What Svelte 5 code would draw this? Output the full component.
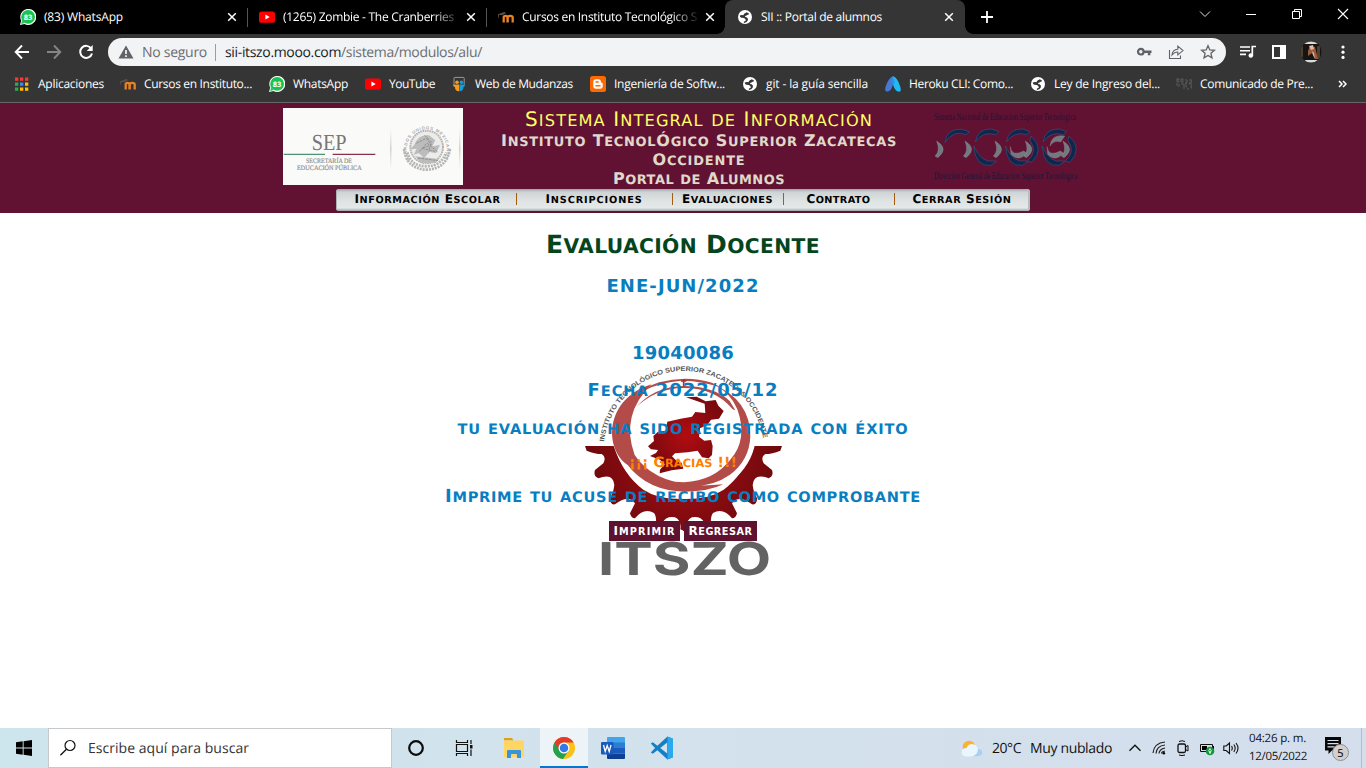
<script>
  const tabs = [
    { icon: 'wa', title: '(83) WhatsApp', w: 79 },
    { icon: 'yt', title: '(1265) Zombie - The Cranberries', w: 171, fade: true },
    { icon: 'moodle', title: 'Cursos en Instituto Tecnológico S', w: 175, fade: true },
    { icon: 'globe', title: 'SII :: Portal de alumnos', w: 121, active: true }
  ];
  const bookmarks = [
    { icon: 'apps', title: 'Aplicaciones', w: 66 },
    { icon: 'moodle', title: 'Cursos en Instituto...', w: 108 },
    { icon: 'wa', title: 'WhatsApp', w: 55 },
    { icon: 'yt', title: 'YouTube', w: 46 },
    { icon: 'movers', title: 'Web de Mudanzas', w: 98 },
    { icon: 'blogger', title: 'Ingeniería de Softw...', w: 111 },
    { icon: 'globe', title: 'git - la guía sencilla', w: 102 },
    { icon: 'azure', title: 'Heroku CLI: Como...', w: 104 },
    { icon: 'globe', title: 'Ley de Ingreso del...', w: 106 },
    { icon: 'noise', title: 'Comunicado de Pre...', w: 113 }
  ];
  const menu = [
    { title: 'Información Escolar', w: 146 },
    { title: 'Inscripciones', w: 97 },
    { title: 'Evaluaciones', w: 91 },
    { title: 'Contrato', w: 64 },
    { title: 'Cerrar Sesión', w: 99 }
  ];

  // Spreads the letters of a label so that it fills the given width.
  function fit(node, width) {
    const natural = node.getBoundingClientRect().width;
    const n = node.textContent.length;
    node.style.letterSpacing = `${(width - natural) / n}px`;
  }

  // Splits a label into runs of lower-case letters and everything else.
  const runs = (text) => text.match(/[a-záéíóúñ]+|[^a-záéíóúñ]+/g) ?? [];
  const isLower = (run) => /^[a-záéíóúñ]/.test(run);
</script>

{#snippet caps(text, width)}
  <span use:fit={width}>{#each runs(text) as r}{#if isLower(r)}<small>{r}</small>{:else}{r}{/if}{/each}</span>
{/snippet}

{#snippet icon(name)}
  <svg class="ico" width="16" height="16" viewBox="0 0 16 16">
    {#if name === 'wa'}
      <path d="M0 16 1.2 11.6A8 8 0 1 1 4.4 14.9Z" fill="#fff" />
      <circle cx="8.1" cy="7.9" r="6.9" fill="#19c351" />
      <path d="m1.2 14.9.9-3.5 2.6 2.6z" fill="#19c351" />
      <text x="8" y="10.8" text-anchor="middle" class="n83">83</text>
    {:else if name === 'yt'}
      <rect y="2.5" width="16" height="11.3" rx="2.6" fill="#f00" />
      <path d="M6.4 5.6v5l4.3-2.5z" fill="#fff" />
    {:else if name === 'moodle'}
      <path d="M5.700 13.500V8.500q0-1.700 1.900-1.700t1.900 1.700v5M9.700 13.500V8.500q0-1.700 2.500-1.700t2.500 1.700v5" fill="none" stroke="#e88224" stroke-width="2.300" />
      <path d="M0 5.200 6.200 3l2 1.100-4 2.100-3-.4-.6 3.400H.2z" fill="#58504c" />
    {:else if name === 'globe'}
      <circle cx="8" cy="8" r="7" fill="#fff" />
      <path d="M9.800 3.200Q7 4 6.300 6.200q-1.800-.4-3.600.3.100 1.700 1.600 2.200 2.200-.2 3.300.6.200 1.200 1.400 1.400-.2 1.400-2 1.800-.6 1 .2 1.500 2.900-.3 3.800-2.900.2-2.300-1.600-2.900Q8.300 8.300 7.900 7q2-.2 2.700-1.200 1.300-.3 1.600-1.100z" fill="#353535" />
    {:else if name === 'apps'}
      {#each ['#f33c35', '#f33c35', '#f33c35', '#2da94f', '#4285f4', '#fbbc05', '#2da94f', '#fbbc05', '#fbbc05'] as c, i}
        <rect x={1 + (i % 3) * 5} y={1.5 + Math.floor(i / 3) * 5} width="3.3" height="3.3" fill={c} />
      {/each}
    {:else if name === 'movers'}
      <path d="M3 8.5V2.2q0-.8.8-.8h8.6q.8 0 .8.8v6.3" fill="none" stroke="#999" stroke-width="1" />
      <circle cx="6" cy="6.3" r="1.8" fill="#f39a24" /><circle cx="10.4" cy="6.3" r="1.8" fill="#199bd8" />
      <path d="M2 8.4h6v6.800q-4 0-4-4Q2 10.500 2 8.400z" fill="#f39a24" />
      <path d="M8.300 8.400h5.800q0 2-1.700 2.800 0 4-4.100 4z" fill="#199bd8" />
    {:else if name === 'blogger'}
      <rect width="16" height="16" rx="2.5" fill="#ff6a00" />
      <path d="M3.3 5.8q0-2.6 2.6-2.6h2.3q2.600 0 2.700 2.600 0 1 .9 1 .9.100.9 1v2.300q0 2.600-2.600 2.600H5.900q-2.600 0-2.600-2.600z" fill="#fff" />
      <path d="M6 6.100h2.200M6 9.800h4" stroke="#ff6a00" stroke-width="1.500" stroke-linecap="round" />
    {:else if name === 'azure'}
      <path d="M7.800.3Q3 2.800.6 10.800q-.8 2.800 0 4.100.9 1.300 3.500.1Q7 13.300 8 8L10.500 2z" fill="#4779d2" />
      <path d="M8 .3q-1.600 2.500-.5 6.400 1.600 6.500 4.200 8.300 2.800 1.500 3.800 0 .8-1.600-.5-5Q12.400 1.600 8 .3z" fill="#1ebaf4" />
      <path d="M7.800.3q-2 3-.6 6.900l.9 2.600 1.700-3.800L8 .3z" fill="#3190ec" />
    {:else if name === 'noise'}
      <path d="M0 3h3v1H1v2h2V5m2-2h2v3H5V3m4 1h2v3H9m4-3h3v2h-2v2M1 7v3m2-2v3m2-3h3v3m2-4v4h1m2-3h3v3h-2M7 12h2m2 1h2m2-1h1" fill="none" stroke="#666" stroke-width=".8" />
    {/if}
  </svg>
{/snippet}

<div class="screen">
  <div class="tabstrip">
    {#each tabs as t, i}
      <div class="tab" class:active={t.active} class:sep={i < 2}>
        {@render icon(t.icon)}
        <div class="ttl" class:fade={t.fade}><span use:fit={t.w}>{t.title}</span></div>
        <svg class="x" width="10" height="10" viewBox="0 0 10 10"><path d="m1.200 1.200 7.600 7.600m0-7.600L1.200 8.800" stroke="#fff" stroke-width="1.500" /></svg>
      </div>
    {/each}
    <svg class="plus" width="12" height="12" viewBox="0 0 12 12"><path d="M6 0v12M0 6h12" stroke="#fff" stroke-width="1.800" /></svg>
    <div class="win">
      <svg width="12" height="12" viewBox="0 0 12 12"><path d="m1 3.500 5 5 5-5" fill="none" stroke="#ddd" /></svg>
      <svg width="12" height="12" viewBox="0 0 12 12"><path d="M1 6.500h10" stroke="#fff" /></svg>
      <svg width="12" height="12" viewBox="0 0 12 12"><path d="M1.500 3.500h7v7h-7zM3.500 3V1.500h7v7H9" fill="none" stroke="#fff" /></svg>
      <svg width="12" height="12" viewBox="0 0 12 12"><path d="m1 1 10 10M11 1 1 11" stroke="#fff" stroke-width="1.100" /></svg>
    </div>
  </div>

  <div class="toolbar">
    <svg class="nav" width="16" height="16" viewBox="0 0 16 16"><path d="M15 8H2M8 1.500 1.700 8 8 14.500" fill="none" stroke="#fff" stroke-width="1.900" /></svg>
    <svg class="nav" width="16" height="16" viewBox="0 0 16 16"><path d="M1 8h13M8 1.500 14.300 8 8 14.500" fill="none" stroke="#858585" stroke-width="1.900" /></svg>
    <svg class="nav" width="16" height="16" viewBox="0 0 16 16"><path d="M13.200 4.500A6 6 0 1 0 14 9.500" fill="none" stroke="#fff" stroke-width="2" /><path d="M14.700 1v6H8.700z" fill="#fff" /></svg>
    <div class="pill">
      <svg width="16" height="14" viewBox="0 0 16 14"><path d="M8 .5 15.500 13.500H.5z" fill="#5f6368" /><path d="M8 5v4M8 10.200v1.700" stroke="#fff" stroke-width="1.600" /></svg>
      <span class="nosec"><span use:fit={65}>No seguro</span></span>
      <span class="url"><span use:fit={257}>sii-itszo.mooo.com<i>/sistema/modulos/alu/</i></span></span>
      <div class="pillicons">
        <svg width="16" height="16" viewBox="0 0 16 16"><circle cx="4.800" cy="7.700" r="2.800" fill="none" stroke="#5f6368" stroke-width="2.200" /><path d="M8 6.500h7.500v2.600H14.400v2.200h-2.600V9.100H8z" fill="#5f6368" /></svg>
        <svg width="16" height="16" viewBox="0 0 16 16"><path d="M1.500 6v8.500h11V11.500M4 11Q4.500 5.600 9.800 5.200V2.200L15 6.600l-5.200 4.300V8Q6.500 7.800 4 11z" fill="none" stroke="#5f6368" stroke-width="1.100" /></svg>
        <svg width="16" height="16" viewBox="0 0 16 16"><path d="m8 1.700 1.800 4.200 4.600.4-3.500 3 1.100 4.500-4-2.400-4 2.400 1.100-4.500-3.500-3 4.600-.4z" fill="none" stroke="#5f6368" stroke-width="1.300" /></svg>
      </div>
    </div>
    <div class="ext">
      <svg width="16" height="16" viewBox="0 0 16 16"><path d="M0 3h10M0 6.700h10M0 10.400h6" stroke="#fff" stroke-width="1.600" /><path d="M12.300 11.500V2.500H16" fill="none" stroke="#fff" stroke-width="1.700" /><circle cx="10.800" cy="11.500" r="2.300" fill="#fff" /></svg>
      <svg width="16" height="16" viewBox="0 0 16 16"><rect x="2" y="2" width="12" height="12" fill="none" stroke="#fff" stroke-width="2" /><path d="M9 2h5v12H9z" fill="#fff" /></svg>
      <svg width="22" height="22" viewBox="0 0 22 22"><clipPath id="av"><circle cx="11" cy="11" r="10.500" /></clipPath><g clip-path="url(#av)"><path fill="#151515" d="M0 0h22v22H0z" /><path fill="#d8dbd8" d="M4 0h14v3H4zM5 19h13v3H5z" /><path fill="#504030" d="M0 5h3v11H0zM17 5h3v13h-3z" /><path fill="#9d5a38" d="m8 10 2-5 5 1 3 12h-3l-3-6-4 3z" /><path fill="#e2b7a8" d="m9 5 4-1 1 4-3 1zM12 10l2 2 1 6-2-4z" /></g></svg>
      <svg width="16" height="16" viewBox="0 0 16 16"><circle cx="8" cy="3" r="1.600" fill="#fff" /><circle cx="8" cy="8.200" r="1.600" fill="#fff" /><circle cx="8" cy="13.400" r="1.600" fill="#fff" /></svg>
    </div>
  </div>

  <div class="bookmarks">
    {#each bookmarks as b}
      <div class="bm">{@render icon(b.icon)}<span use:fit={b.w}>{b.title}</span></div>
    {/each}
    <svg width="10" height="8" viewBox="0 0 10 8"><path d="m1 1 3 3-3 3m4-6 3 3-3 3" fill="none" stroke="#fff" stroke-width="1.500" /></svg>
  </div>

  <header>
    <div class="banner">
      <svg class="sep-logo" width="180" height="77" viewBox="0 0 540 231">
        <defs>
          <linearGradient id="sl" x1="0" y1="0" x2="0" y2="1"><stop offset="0" stop-color="#ccc" stop-opacity="0" /><stop offset=".5" stop-color="#bbb" /><stop offset="1" stop-color="#ccc" stop-opacity="0" /></linearGradient>
          <path id="seal" d="M383 160A60 60 0 1 1 479 160" />
        </defs>
        <rect width="540" height="231" fill="#fafbf9" />
        <text class="sep-t" x="86" y="127" textLength="105" lengthAdjust="spacingAndGlyphs">SEP</text>
        <path d="M2 139h124" stroke="#4e9274" stroke-width="4" /><path d="M149 139h128" stroke="#8c2e50" stroke-width="4" />
        <text class="sep-s" x="69" y="165" textLength="138" lengthAdjust="spacingAndGlyphs">SECRETARÍA DE</text>
        <text class="sep-s" x="42" y="187" textLength="194" lengthAdjust="spacingAndGlyphs">EDUCACIÓN PÚBLICA</text>
        <path d="M322 60h3v125h-3zM529 60h3v125h-3z" fill="url(#sl)" />
        <text class="seal-t"><textPath href="#seal" startOffset="6" textLength="250">ESTADOS UNIDOS MEXICANOS</textPath></text>
        <circle cx="431" cy="117" r="50" fill="#ececea" />
        <circle cx="431" cy="117" r="49" fill="none" stroke="#b5b5b5" stroke-width="6" stroke-dasharray="5 2" />
        <path d="M363 123q8 60 68 62 60-2 70-62M373 133q11 42 58 42 46-2 58-42" fill="none" stroke="#b4b4b4" stroke-width="8" stroke-dasharray="6 3" />
        <path d="M393 112q13-35 45-30l19 15-9 18 23-4-12 25-19-4-17 18-15-14-16 4 9-18-20 2zM397 145l70 8-9 12h-45z" fill="#bcbcbc" />
        <path d="m400 106 30-15 15 20-28 10 38 9M410 130l22-25 32 27M405 150l60 8M425 82l20 20-8 28" fill="none" stroke="#8f8f8f" stroke-width="3" stroke-dasharray="8 3" />
      </svg>
      <div class="titles">
        <div class="t1">{@render caps('Sistema Integral de Información', 348)}</div>
        <div>{@render caps('Instituto TecnolÓgico Superior Zacatecas', 396)}</div>
        <div>{@render caps('Occidente', 93)}</div>
        <div>{@render caps('Portal de Alumnos', 172)}</div>
      </div>
      <svg class="dg-logo" width="150" height="77" viewBox="750 24 450 231">
        <text x="762" y="61" class="dg" textLength="426" lengthAdjust="spacingAndGlyphs">Sistema Nacional de Educacion Superior Tecnologica</text>
        <text x="762" y="238" class="dg" textLength="430" lengthAdjust="spacingAndGlyphs">Direccion General de Educacion Superior Tecnologica</text>
        <g fill="#10264c" stroke="#34537f" stroke-width="2">
          <path d="M795 128Q800 85 845 88l23 7-10 9Q820 88 795 128z" />
          <path id="arcTop" d="M886 126Q893 85 935 87l22 8-10 9Q910 92 886 126z" />
          <path id="arcBot" d="M881 138Q887 202 932 196l18-12-10-1Q905 190 881 138z" />
          <use href="#arcTop" x="93" /><use href="#arcBot" x="95" /><use href="#arcTop" x="203" /><use href="#arcBot" x="205" />
          <path id="arcR" d="M1053 108q43 38 2 79l-13-4q32-26 8-62z" /><use href="#arcR" x="114" />
        </g>
        <g fill="#737980" stroke="#979ca0" stroke-width="1">
          <path id="leaf" d="M770 123q38 24 3 50l-8-5q17-14 5-45z" />
          <use href="#leaf" x="85" /><use href="#leaf" x="175" /><use href="#leaf" x="266" /><use href="#leaf" x="379" />
          <path id="low" d="M991 140q5 32 40 13l10 7q-26 27-48 3z" /><use href="#low" x="110" />
          <path d="M1110 138q4-37 44-30l-12 18q-20-7-32 12z" />
        </g>
      </svg>
    </div>
    <nav>
      {#each menu as m}<div>{@render caps(m.title, m.w)}</div>{/each}
    </nav>
  </header>

  <main>
    <svg class="crest" width="230" height="230" viewBox="0 0 690 690">
      <defs>
        <path id="arc" d="M102 262A241 241 0 0 1 581 262" />
        <radialGradient id="zac"><stop offset="0" stop-color="#b30c12" /><stop offset="1" stop-color="#7b0a0e" /></radialGradient>
        <radialGradient id="cog" gradientUnits="userSpaceOnUse" cx="341" cy="300" r="300"><stop offset=".4" stop-color="#930c11" /><stop offset="1" stop-color="#6a090d" /></radialGradient>
      </defs>
      <g fill="url(#cog)">
        <path id="half" d="M342 432Q265 434 220 404 160 360 131 273H45L50 287Q75 297 95 297 110 305 100 325L75 345Q69 363 85 370 130 352 133 390 130 415 120 430 120 451 135 448 175 417 195 445L180 475Q183 490 195 490 222 457 252 474 260 484 258 510 268 520 278 502 290 482 315 487 335 497 331 523L342 528z" />
        <use href="#half" transform="matrix(-1 0 0 1 681 0)" />
      </g>
      <path d="M341 85C210 85 130 150 130 245 140 350 225 426 341 426S542 350 556 262C550 150 470 85 341 85z" fill="#fff" />
      <g fill="#b34b48">
        <path d="M245 88C105 130 100 280 173 330q60 78 172 80 70 0 115-22-55 5-90 2Q245 378 194 300 150 180 245 88z" />
        <path d="M430 88q48 20 72 75 32 90-20 150-50 65-140 69-62 0-105-24 45 35 125 37 70-2 118-36 58-44 61-114 0-110-111-157z" />
        <path d="M198 157q54-62 143-64 92 1 138 45l17 28-8-3q-52-64-147-64-82 0-143 58z" />
        <path d="M167 256q18 80 90 112-84-28-90-112zM219 108q23-19 49-26 80-22 158 1l30 16q-56-21-121-22-64 4-116 31z" />
      </g>
      <path d="M341 72v22M333 78h16" stroke="#a3312e" stroke-width="5" />
      <path d="m348 127 32-2 27 14 30-4 8 17 16 16-14 23-24 3-11 16-22 10-3 25 16 12 20-2 5 18-2 27-10 10-20-3-13-20-30 5-38 3-9 9 14 14 15 5 5 18-35 5-36 9 1-11 14-16-14-14-30-11 18-9 6-9-21-2-9-9 18-16-2-15 14-13 22-3 6-27 40-9 34-6 10-14 30 3-2-28z" fill="url(#zac)" />
      <text class="ring-t"><textPath href="#arc" startOffset="2" textLength="688" lengthAdjust="spacingAndGlyphs">INSTITUTO TECNOLÓGICO SUPERIOR ZACATECAS OCCIDENTE</textPath></text>
      <text class="itszo" x="84" y="661" textLength="520" lengthAdjust="spacingAndGlyphs">ITSZO</text>
    </svg>
    <div class="copy">
      <h1>{@render caps('Evaluación Docente', 274)}</h1>
      <p class="a">{@render caps('ENE-JUN/2022', 153)}</p>
      <p class="b">{@render caps('19040086', 102)}</p>
      <p class="c">{@render caps('Fecha 2022/05/12', 191)}</p>
      <p class="c">{@render caps('tu evaluación ha sido registrada con éxito', 451)}</p>
      <p class="d">{@render caps('¡¡¡ Gracias !!!', 108)}</p>
      <p class="e">{@render caps('Imprime tu acuse de recibo como comprobante', 476)}</p>
      <div class="btns"><button>{@render caps('Imprimir', 62)}</button><button class="r">{@render caps('Regresar', 64)}</button></div>
    </div>
  </main>

  <footer>
    <div class="start"><svg width="16" height="16" viewBox="0 0 16 16"><path d="M0 2.300 6.700 1.300V7.600H0zM7.600 1.200 16 0v7.600H7.600zM0 8.500h6.700v6.300L0 13.800zM7.600 8.500H16V16l-8.400-1.200z" /></svg></div>
    <div class="search">
      <svg width="18" height="18" viewBox="0 0 18 18"><circle cx="11" cy="6.500" r="5" fill="none" stroke="#111" stroke-width="1.200" /><path d="m7.400 10.200-6 6" stroke="#111" stroke-width="1.300" /></svg>
      <span use:fit={161}>Escribe aquí para buscar</span>
    </div>
    <div class="apps">
      <div><svg width="18" height="18" viewBox="0 0 18 18"><circle cx="9" cy="9" r="6.800" fill="none" stroke="#0b0b0b" stroke-width="2.200" /></svg></div>
      <div><svg width="18" height="18" viewBox="0 0 18 18"><path d="M1.500 1v2.500h11V1M1.500 17v-2.500h11V17M1.500 5.500h11v7h-11zM16 1v4m0 5.500V17" fill="none" stroke="#111" stroke-width="1.200" /><path d="M15 6h2.500v3.500H15z" fill="#111" /></svg></div>
      <div><svg width="22" height="22" viewBox="0 0 22 22"><path d="M1 1h8l1.500 2.500H1z" fill="#e2a018" /><path d="M1 3.500h19q1 0 1 1V19q0 1-1 1H1z" fill="#ffd663" /><path d="M4 21v-7q0-1 1-1h12q1 0 1 1v7h-4v-3q0-1-1-1H9q-1 0-1 1v3z" fill="#3795dc" /></svg></div>
      <div class="on"><svg width="24" height="24" viewBox="0 0 48 48"><circle cx="24" cy="24" r="22" fill="#fbc116" /><path d="M24 24 5 13A22 22 0 0 0 22 46L33.500 29z" fill="#25a04b" /><path d="M5 13a22 22 0 0 1 38.200 0H24A11 11 0 0 0 14.500 29.500z" fill="#e33b2e" /><circle cx="24" cy="24" r="11" fill="#fff" /><circle cx="24" cy="24" r="8.500" fill="#317be8" /></svg></div>
      <div><svg width="24" height="22" viewBox="0 0 24 22"><path d="M7 0h16q1 0 1 1v5H6V1q0-1 1-1z" fill="#41a5ee" /><path d="M6 5.500h18V11H6z" fill="#2b7cd3" /><path d="M6 11h18v5.500H6z" fill="#185abd" /><path d="M6 16.500h18V21q0 1-1 1H7q-1 0-1-1z" fill="#103f91" /><rect y="5" width="12.500" height="12.500" rx="1" fill="#185abd" /><path d="m2.500 8 1.700 6.500L6.200 8.500l2 6L10 8" fill="none" stroke="#fff" stroke-width="1.300" /></svg></div>
      <div><svg width="24" height="24" viewBox="0 0 24 24"><path d="m17.500.5 5.500 2.300v18.400l-5.500 2.300L7.400 14.300l-4.600 3.500L.8 16.600l4.300-4.600L.8 7.400l2-1.200 4.600 3.500zM17.200 6.500 10.200 12l7 5.500z" fill="#147fc4" fill-rule="evenodd" /><path d="m17.500.5 5.500 2.300v18.400l-5.500 2.300z" fill="#2ca8ef" /></svg></div>
    </div>
    <div class="weather">
      <svg width="22" height="18" viewBox="0 0 22 18"><circle cx="8" cy="7" r="6.300" fill="#f8b332" /><path d="M5 16.500Q.5 16 .7 12T5.500 8q2-4.600 6.500-3.800 3.800.7 4.500 4 4.700.2 4.800 4.100 0 4-4.800 4.200z" fill="#eaf5fd" /><path d="M10 16.500q7-1 7-8 4.300.4 4.300 4t-4.800 4z" fill="#a7d0f3" /></svg>
      <span class="deg"><span use:fit={29}>20°C</span></span><span use:fit={82}>Muy nublado</span>
    </div>
    <div class="tray">
      <svg width="16" height="16" viewBox="0 0 16 16"><path d="m2.500 10.700 5.500-5.500 5.500 5.500" fill="none" stroke="#111" stroke-width="1.300" /></svg>
      <svg width="16" height="16" viewBox="0 0 16 16"><path d="M2 13Q3 3 14 2M5 13.500Q5.500 6 14 5M8 13.500Q8.500 9 14 8M10.500 13.500q0-2 3.500-2.500" fill="none" stroke="#222" stroke-width="1.200" /><circle cx="12.800" cy="13.300" r="1.300" /></svg>
      <svg width="16" height="16" viewBox="0 0 16 16"><rect x="3" y="4" width="7.500" height="8.500" rx="1.500" fill="none" stroke="#111" stroke-width="1.300" /><path d="m10.500 7 2.500-1.500v5.500l-2.500-1.500M4 1.500Q7 0 10 1.500M4 15q3 1.200 6 0" fill="none" stroke="#111" /></svg>
      <svg width="16" height="16" viewBox="0 0 16 16"><path d="M1.500 4.500h12v7h-12zM14.500 6v4" fill="none" stroke="#111" /><path d="M3 6h5v4H3z" /><circle cx="11" cy="11" r="4.300" fill="#12983a" /><path d="M11 8.500q2.500 2 0 4.500-2.500-2.500 0-4.500zM11 11v3" fill="none" stroke="#fff" stroke-width=".8" /></svg>
      <svg width="16" height="16" viewBox="0 0 16 16"><path d="M.8 6h2.400L6.500 3v10.500L3.200 10.500H.8zM8.500 6q1.600 2.200 0 4.500M10.800 4.500q2.800 3.600 0 7.300M13 3q4 5.200 0 10.500" fill="none" stroke="#111" stroke-width="1.100" /></svg>
    </div>
    <div class="clock"><div><span use:fit={57}>04:26 p. m.</span></div><div><span use:fit={58}>12/05/2022</span></div></div>
    <svg class="notif" width="28" height="28" viewBox="0 0 28 28"><path d="M2 3h16v13.500H9L5.500 20v-3.500H2z" fill="#080808" /><path d="M4.500 6.500h11M4.500 9.700h11M4.500 12.900h7" stroke="#d6e0ec" stroke-width="1.200" /><circle cx="17.500" cy="18.500" r="8" fill="#d0d0d0" stroke="#909090" /><text x="17.500" y="22.500" text-anchor="middle">5</text></svg>
    <div class="peek"></div>
  </footer>
</div>

<style>
  :global(body) { background: #fff; overflow: hidden; }
  .screen { width: 1366px; height: 768px; display: flex; flex-direction: column; font-family: "Open Sans", "Noto Sans", sans-serif; text-rendering: geometricPrecision; overflow: hidden; }
  span { white-space: nowrap; display: inline-block; }
  small { font-size: 0.81em; text-transform: uppercase; line-height: 0; }
  svg { display: block; flex: none; }
  .n83 { font: bold 7.5px "Open Sans", sans-serif; fill: #fff; }

  .tabstrip { height: 34px; background: #000; display: flex; align-items: center; padding-left: 8px; flex: none; }
  .tab { width: 239px; height: 34px; display: flex; align-items: center; padding-left: 12px; box-sizing: border-box; font-size: 12px; color: #fff; position: relative; }
  .tab.sep::after { content: ""; position: absolute; right: -1px; top: 8px; width: 1px; height: 19px; background: #555; }
  .tab.active { width: 240px; background: #353535; border-radius: 8px 8px 0 0; }
  .tab.active::before, .tab.active::after { content: ""; position: absolute; bottom: 0; width: 8px; height: 8px; }
  .tab.active::before { left: -8px; background: radial-gradient(circle at 0 0, #000 7.5px, #353535 8px); }
  .tab.active::after { right: -8px; background: radial-gradient(circle at 100% 0, #000 7.5px, #353535 8px); }
  .ttl { margin-left: 8px; width: 175px; line-height: 34px; overflow: hidden; }
  .fade { -webkit-mask: linear-gradient(90deg, #000 150px, transparent 178px); mask: linear-gradient(90deg, #000 150px, transparent 178px); }
  .x { margin-left: 8px; }
  .plus { margin-left: 16px; }
  .win { margin-left: auto; display: flex; align-self: stretch; padding-bottom: 6px; }
  .win svg { padding: 8px 17px; }

  .toolbar { height: 36px; background: #353535; display: flex; align-items: center; padding-left: 14px; flex: none; }
  .nav { margin-right: 16px; }
  .nav:nth-of-type(3) { margin-right: 14px; }
  .pill { width: 1118px; height: 28px; border-radius: 14px; background: #f1f3f5; display: flex; align-items: center; padding-left: 10px; box-sizing: border-box; font-size: 14px; color: #202124; line-height: 28px; }
  .nosec { margin-left: 8px; width: 73px; color: #6b6e72; padding-top: 1px; }
  .url { padding-left: 9px; border-left: 1px solid #9b9da0; line-height: 17px; }
  .url i { font-style: normal; color: #6b6e72; }
  .pillicons { margin-left: auto; display: flex; gap: 16px; padding-right: 10px; }
  .ext { display: flex; align-items: center; padding-left: 14px; gap: 13px; }
  .ext svg:first-child { margin-right: 2px; }

  .bookmarks { height: 33px; box-sizing: border-box; background: #353535; border-bottom: 1px solid #666; display: grid; grid-template-columns: 106px 149px 96px 86px 139px 152px 143px 145px 146px 162px 10px; align-items: center; padding: 0 0 4px 14px; flex: none; }
  .bm { display: flex; align-items: center; gap: 8px; font-size: 12px; line-height: 20px; color: #fff; }

  header { height: 110px; background: #611232; padding-top: 5px; box-sizing: border-box; flex: none; font-family: "DejaVu Sans", Verdana, sans-serif; }
  .banner { width: 800px; height: 77px; margin: 0 auto; display: flex; }
  .titles { width: 470px; margin-left: 1px; text-align: center; font-weight: bold; font-size: 16px; color: #e0d9cb; }
  .titles div { height: 19px; line-height: 19px; position: relative; top: 3px; }
  .titles .t1 { font-weight: normal; font-size: 20px; color: #ffff66; height: 20px; line-height: 20px; top: 1px; }
  .dg-logo { margin-left: -4px; }
  .dg { font: 31px "Liberation Serif", serif; fill: #1b1637; }
  .sep-t { font: 69px "Liberation Serif", serif; fill: #777; }
  .sep-s { font: 20px "Liberation Serif", serif; fill: #888; stroke: #999; stroke-width: .5px; }
  .seal-t { font: bold 13px "Liberation Sans", sans-serif; fill: #aaa; }
  nav { width: 694px; height: 22px; margin: 4px auto 0; border-radius: 3px; display: grid; grid-template-columns: 180px 156px 111px 111px 136px; background: linear-gradient(#9da5aa, #ced4d5 3px, #dfe3e3 12px, #e3e8e8 19px, #9fa6aa); box-shadow: inset 1px 0 #aab1b5, inset -2px 0 #b6bdc0; font-size: 12px; font-weight: bold; color: #000; }
  nav div { text-align: center; line-height: 20px; height: 19px; position: relative; }
  nav div:first-child { padding-left: 3px; }
  nav div + div::before { content: ""; position: absolute; left: 0; top: 4px; width: 1px; height: 12px; background: #a45b12; }

  main { height: 515px; flex: none; position: relative; font-family: "DejaVu Sans", Verdana, sans-serif; font-weight: bold; }
  .crest { position: absolute; left: 570px; top: 142px; }
  .copy { position: relative; text-align: center; color: #087ec1; font-size: 18px; padding-top: 17px; }
  h1, p { margin: 0; }
  h1 { font-size: 25px; color: #04451c; height: 30px; line-height: 30px; }
  p { height: 24px; line-height: 24px; }
  .a { margin-top: 15px; }
  .b { margin-top: 43px; }
  .c { margin-top: 13px; }
  .c + .c { margin-top: 14px; }
  .d { margin-top: 10px; color: #ff7f00; font-size: 14px; }
  .e { margin-top: 10px; }
  .btns { display: flex; justify-content: center; gap: 4px; margin-top: 12px; }
  button { width: 71px; height: 20px; padding: 0; border: 0; background: #5f1230; color: #fff; font: inherit; font-size: 12px; line-height: 19px; }
  .r { width: 73px; }
  .ring-t { font: bold 20px "Liberation Sans", sans-serif; fill: #565656; }
  .itszo { font: bold 136px Inter, sans-serif; fill: #636363; }

  footer { height: 40px; flex: none; display: flex; align-items: center; background: linear-gradient(90deg, #cde5ed, #d3e2ec 50%, #d4deed); color: #111; font-size: 14px; }
  .start { width: 48px; display: flex; justify-content: center; }
  .search { width: 344px; height: 40px; box-sizing: border-box; background: #fff; border: 1px solid #c5c9cb; display: flex; align-items: center; gap: 11px; padding-left: 10px; color: #333; }
  .apps { display: flex; margin-left: -1px; }
  .apps div { width: 49px; height: 40px; display: flex; align-items: center; justify-content: center; }
  .apps div:nth-child(2) { width: 47px; }
  .apps div:nth-child(3) { width: 53px; }
  .apps .on { width: 48px; background: #edf4f8; box-shadow: inset 0 -2px #0078d7; }
  .weather { margin-left: 275px; display: flex; align-items: center; line-height: 21px; padding-top: 1px; }
  .deg { width: 38px; margin-left: 9px; }
  .tray { margin-left: 15px; display: flex; gap: 8px; }
  .clock { margin-left: 10px; width: 69px; font-size: 11.500px; line-height: 18px; padding-bottom: 0; }
  .notif { margin-left: 5px; }
  .notif text { font: 11px "Open Sans", sans-serif; }
  .peek { align-self: stretch; border-left: 1px solid #b3bccb; margin-left: 10px; }
</style>
